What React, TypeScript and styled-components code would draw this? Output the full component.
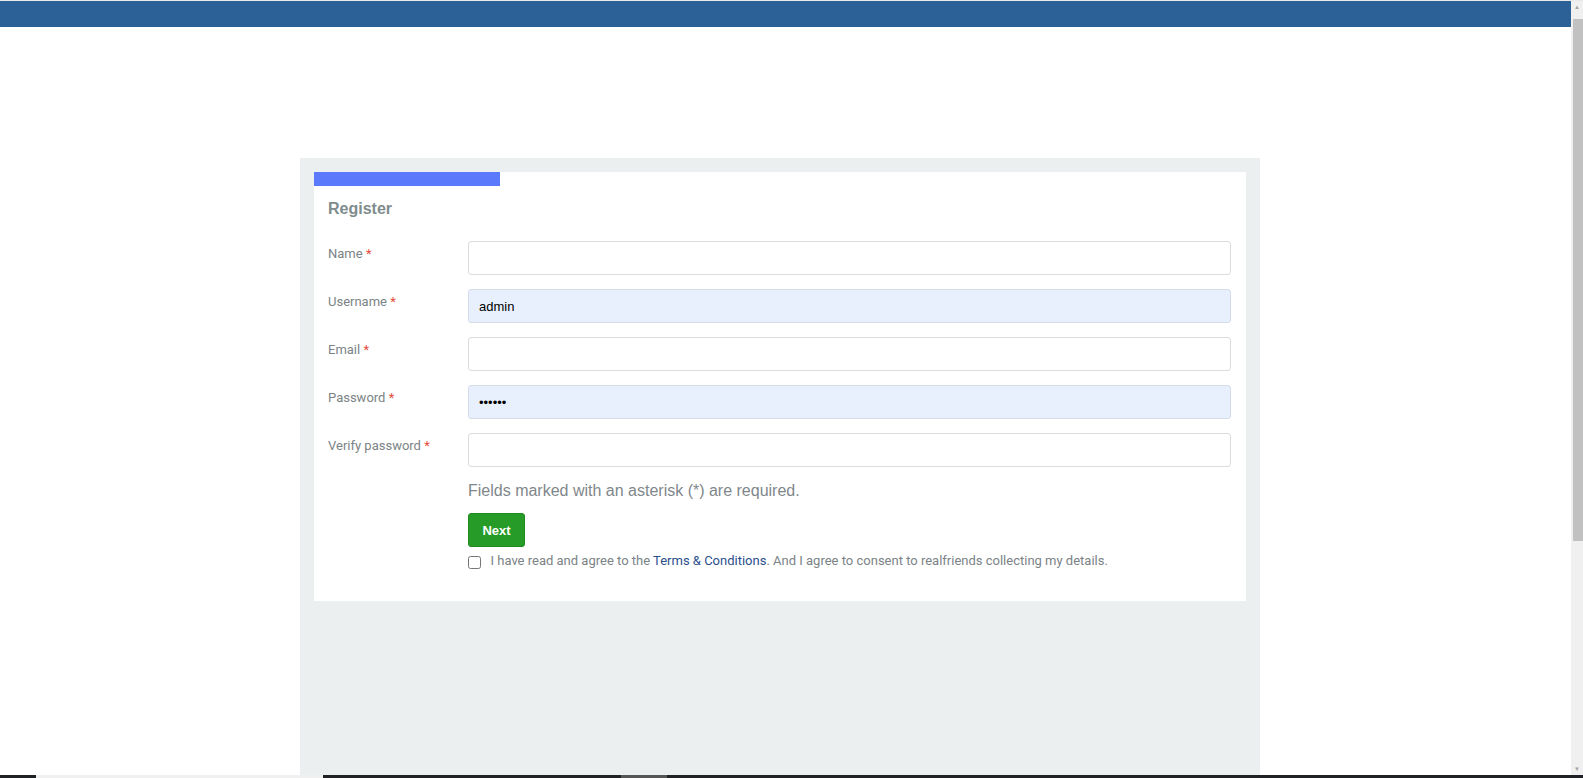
import { useState } from "react";
import styled, { createGlobalStyle } from "styled-components";

const GlobalStyle = createGlobalStyle`
  html, body {
    margin: 0;
    padding: 0;
    height: 100%;
    overflow: hidden;
    background: #ffffff;
  }
  * {
    box-sizing: border-box;
  }
`;

interface Field {
  label: string;
  name: string;
  type: string;
  value: string;
  autofilled?: boolean;
}

const fields: Field[] = [
  { label: "Name", name: "name", type: "text", value: "" },
  { label: "Username", name: "username", type: "text", value: "admin", autofilled: true },
  { label: "Email", name: "email", type: "email", value: "" },
  { label: "Password", name: "password", type: "password", value: "123456", autofilled: true },
  { label: "Verify password", name: "verify", type: "password", value: "" },
];

function App() {
  const [values, setValues] = useState<Record<string, string>>(
    Object.fromEntries(fields.map((f) => [f.name, f.value]))
  );
  const [agree, setAgree] = useState(false);

  return (
    <Page>
      <GlobalStyle />
      <Main>
        <TopBar />
        <Wrapper>
          <Panel>
            <Card>
              <Progress />
              <Title>Register</Title>
              <form onSubmit={(e) => e.preventDefault()}>
                {fields.map((f) => (
                  <Row key={f.name}>
                    <Label htmlFor={f.name}>
                      {f.label} <Star>*</Star>
                    </Label>
                    <Input
                      id={f.name}
                      name={f.name}
                      type={f.type}
                      $filled={!!f.autofilled}
                      value={values[f.name]}
                      onChange={(e) =>
                        setValues({ ...values, [f.name]: e.target.value })
                      }
                    />
                  </Row>
                ))}
                <Controls>
                  <Note>Fields marked with an asterisk (*) are required.</Note>
                  <NextButton type="submit">Next</NextButton>
                  <Agree>
                    <Check
                      type="checkbox"
                      checked={agree}
                      onChange={(e) => setAgree(e.target.checked)}
                    />
                    <span>
                      I have read and agree to the{" "}
                      <TermsLink href="#">Terms &amp; Conditions</TermsLink>. And
                      I agree to consent to realfriends collecting my details.
                    </span>
                  </Agree>
                </Controls>
              </form>
            </Card>
          </Panel>
        </Wrapper>
      </Main>
      <ScrollBar>
        <Arrow>▲</Arrow>
        <Track>
          <Thumb />
        </Track>
        <Arrow>▼</Arrow>
      </ScrollBar>
      <Taskbar>
        <TaskItem $w={287} $bg="#f0f0f0" $ml={36} />
        <TaskItem $w={46} $bg="#555555" $ml={298} />
      </Taskbar>
    </Page>
  );
}

const Page = styled.div`
  display: flex;
  height: 100vh;
  border-top: 1px solid #e9e9e9;
`;

const Main = styled.div`
  flex: 1;
  display: flex;
  flex-direction: column;
  min-width: 0;
`;

const TopBar = styled.div`
  height: 26px;
  background: #2c6198;
  flex-shrink: 0;
`;

const Wrapper = styled.div`
  flex: 1;
  padding: 131px 0 0 300px;
`;

const Panel = styled.div`
  width: 960px;
  height: 100%;
  background: #ebeff0;
  padding: 14px;
`;

const Card = styled.div`
  background: #ffffff;
  padding: 0 15px 31px 14px;
  font-family: Roboto, "Liberation Sans", sans-serif;
`;

const Progress = styled.div`
  width: 186px;
  height: 14px;
  margin-left: -14px;
  background: #5a79fb;
`;

const Title = styled.h3`
  margin: 13px 0 22px;
  font-family: "Liberation Sans", Arial, sans-serif;
  font-size: 16px;
  line-height: 20px;
  font-weight: 700;
  color: #7f8c8d;
`;

const Row = styled.div`
  display: flex;
  align-items: flex-start;
  margin-bottom: 14px;
`;

const Label = styled.label`
  width: 140px;
  flex-shrink: 0;
  padding-top: 4px;
  font-size: 13px;
  line-height: 18px;
  color: #7b8386;
`;

const Star = styled.span`
  color: #e74c3c;
`;

const Input = styled.input<{ $filled: boolean }>`
  width: 763px;
  height: 34px;
  padding: 0 10px;
  border: 1px solid ${(p) => (p.$filled ? "#d4dcea" : "#dcdcdc")};
  border-radius: 3px;
  background: ${(p) => (p.$filled ? "#e8f0fe" : "#ffffff")};
  font-family: "Liberation Sans", Arial, sans-serif;
  font-size: 13px;
  color: #000;
  outline: none;
`;

const Controls = styled.div`
  margin-left: 140px;
  margin-top: 1px;
`;

const Note = styled.p`
  margin: 0 0 12px;
  font-family: "Liberation Sans", Arial, sans-serif;
  font-size: 16px;
  line-height: 20px;
  color: #7f878b;
`;

const NextButton = styled.button`
  display: block;
  width: 57px;
  height: 34px;
  padding: 0;
  border: 1px solid #1f8a1f;
  border-radius: 3px;
  background: #279b27;
  color: #ffffff;
  font-family: "Liberation Sans", Arial, sans-serif;
  font-size: 13px;
  font-weight: 700;
  cursor: pointer;
`;

const Agree = styled.label`
  display: flex;
  align-items: flex-start;
  gap: 9.5px;
  margin-top: 4.5px;
  font-size: 13px;
  line-height: 18px;
  color: #7b8386;
`;

const Check = styled.input`
  width: 13px;
  height: 13px;
  margin: 4.5px 0 0;
  flex-shrink: 0;
`;

const TermsLink = styled.a`
  color: #2b4e8c;
  text-decoration: none;
`;

const ScrollBar = styled.div`
  width: 12px;
  flex-shrink: 0;
  background: #f0f0f0;
  display: flex;
  flex-direction: column;
  padding-bottom: 3px;
`;

const Arrow = styled.div`
  height: 12px;
  font-size: 6px;
  line-height: 12px;
  text-align: center;
  color: #a3a3a3;
`;

const Track = styled.div`
  flex: 1;
`;

const Thumb = styled.div`
  margin: 6px 0 0 2px;
  height: 522px;
  background: #c1c1c1;
`;

const Taskbar = styled.div`
  position: fixed;
  left: 0;
  right: 0;
  bottom: 0;
  height: 3px;
  background: #202124;
  display: flex;
`;

const TaskItem = styled.div<{ $w: number; $bg: string; $ml: number }>`
  width: ${(p) => p.$w}px;
  margin-left: ${(p) => p.$ml}px;
  background: ${(p) => p.$bg};
`;

export default App;
